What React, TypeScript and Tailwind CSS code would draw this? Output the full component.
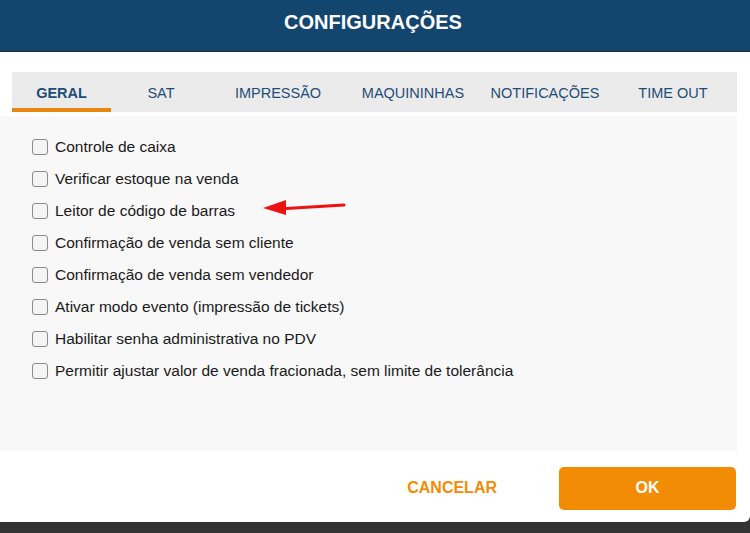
import { useState } from 'react'

const tabs = [
  { label: 'GERAL', w: 'w-[99px]' },
  { label: 'SAT', w: 'w-[100px]' },
  { label: 'IMPRESSÃO', w: 'w-[134px]' },
  { label: 'MAQUININHAS', w: 'w-[136px]' },
  { label: 'NOTIFICAÇÕES', w: 'w-[128px]' },
  { label: 'TIME OUT', w: 'w-[128px]' },
]

const options = [
  'Controle de caixa',
  'Verificar estoque na venda',
  'Leitor de código de barras',
  'Confirmação de venda sem cliente',
  'Confirmação de venda sem vendedor',
  'Ativar modo evento (impressão de tickets)',
  'Habilitar senha administrativa no PDV',
  'Permitir ajustar valor de venda fracionada, sem limite de tolerância',
]

export default function App() {
  const [active, setActive] = useState(0)
  const [checked, setChecked] = useState<boolean[]>(options.map(() => false))

  return (
    <div className="w-[750px] h-[533px] bg-[#333333] overflow-hidden font-['Liberation_Sans',Arial,sans-serif]">
      <div className="relative bg-white rounded-br-[6px] flex flex-col">
        <header className="h-[52px] bg-[#13466f] border-b border-[#2b2b2b] flex items-center justify-center">
          <h1 className="text-white text-[20px] font-bold leading-none -mt-[8px] ml-[-4px]">CONFIGURAÇÕES</h1>
        </header>

        <nav className="mt-[20px] ml-[12px] mr-[13px] h-[40px] bg-[#ebebeb] flex">
          {tabs.map((t, i) => (
            <button
              key={t.label}
              onClick={() => setActive(i)}
              className={`${t.w} h-full flex items-center justify-center text-[14.5px] text-[#1e4d78] border-b-[4px] pt-[7px] ${
                i === active ? 'border-[#e8860f] font-bold text-[#1a466e]' : 'border-transparent'
              }`}
            >
              {t.label}
            </button>
          ))}
        </nav>

        <section className="mt-[4px] mr-[13px] h-[335px] bg-[#f8f8f8] pt-[15px] pl-[32px]">
          {options.map((label, i) => (
            <label key={label} className="h-[32px] flex items-center gap-[7px] cursor-pointer">
              <input
                type="checkbox"
                checked={checked[i]}
                onChange={() => setChecked(c => c.map((v, j) => (j === i ? !v : v)))}
                className="appearance-none w-[16px] h-[16px] rounded-[3px] border border-[#8c8c8c] bg-[#f4f4f4] checked:bg-[#13466f]"
              />
              <span className="text-[15.5px] text-[#1a1a1a]">{label}</span>
            </label>
          ))}
        </section>

        <footer className="h-[71px] flex items-center justify-end pr-[14px] pt-[3px]">
          <button className="text-[16px] font-bold text-[#f28c05] mr-[62px]">CANCELAR</button>
          <button className="w-[177px] h-[43px] rounded-[5px] bg-[#f28c05] text-white text-[16px] font-bold">OK</button>
        </footer>

        <svg className="absolute left-[262px] top-[198px]" width="84" height="18" viewBox="0 0 84 18">
          <path d="M24 10.5 L82 7" stroke="#ee1111" strokeWidth="3" strokeLinecap="round" />
          <path d="M1 10 L24 2 L24 17 Z" fill="#ee1111" />
        </svg>
      </div>
    </div>
  )
}
